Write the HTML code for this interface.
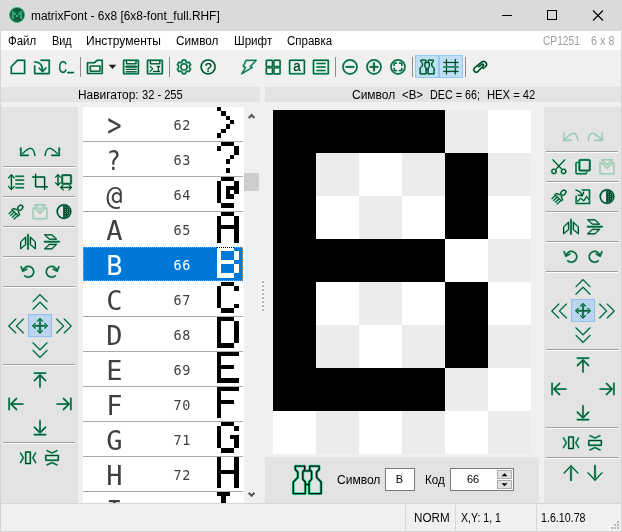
<!DOCTYPE html>
<html lang="ru"><head><meta charset="utf-8"><title>matrixFont - 6x8 [6x8-font_full.RHF]</title>
<style>
html,body{margin:0;padding:0;background:#f0f0f0;}
body{width:622px;height:532px;overflow:hidden;position:relative;font-family:"Liberation Sans","DejaVu Sans",sans-serif;font-size:12px;color:#000;}
.a{position:absolute;}
.t{position:absolute;white-space:pre;line-height:14px;height:14px;transform-origin:0 0;}
.mono{font-family:"DejaVu Sans Mono","Liberation Mono",monospace;}
#win{position:absolute;left:0;top:0;width:622px;height:532px;background:#f0f0f0;overflow:hidden;}
#title{left:0;top:0;width:622px;height:31px;background:#dadada;}
#menu{left:1px;top:31px;width:620px;height:19px;background:#fff;}
.strip{background:#e3e3e3;}
.sep{position:absolute;height:1px;background:#a0a0a0;border-bottom:1px solid #fff;}
.vsep{position:absolute;width:1px;background:#8c8c8c;}
.hot{position:absolute;box-sizing:border-box;}
#list{left:83px;top:107px;width:161px;height:396px;background:#fff;overflow:hidden;}
.row{position:absolute;left:0;width:161px;height:35px;}
.row .ln{position:absolute;left:0;top:34px;width:160px;height:1px;background:#ababab;}
.row .ch{position:absolute;left:11.4px;width:40px;text-align:center;top:1.4px;height:35px;line-height:35px;font-size:27px;color:#404040;}
.row .nm{position:absolute;left:86px;width:26px;text-align:center;top:1.2px;height:35px;line-height:35px;font-size:13.5px;letter-spacing:0.6px;text-indent:0.6px;color:#404040;}
.row.sel .bl{position:absolute;left:0;top:0;width:160px;height:34px;background:#0078d7;}
.row.sel .ch,.row.sel .nm{color:#fff;}
.inp{position:absolute;box-sizing:border-box;background:#fff;border:1px solid #7a7a7a;}

</style></head><body><div id="win">
<div class="a" id="title"></div>
<svg class="a" style="left:0;top:0" width="622" height="31" viewBox="0 0 622 31">
<circle cx="17.05" cy="14.9" r="7.5" fill="#125c40" stroke="#36b582" stroke-width="0.9"/>
<path d="M11.95 10.95h1.7v1.9h-1.7zM11.95 12.95h1.7v1.9h-1.7zM11.95 15.05h1.7v1.9h-1.7zM11.95 17.05h1.7v1.9h-1.7zM20.25 10.95h1.7v1.9h-1.7zM20.25 12.95h1.7v1.9h-1.7zM20.25 15.05h1.7v1.9h-1.7zM20.25 17.05h1.7v1.9h-1.7zM13.9 12.85h1.9v1.9h-1.9zM16 15h1.9v1.9h-1.9zM18.1 12.85h1.9v1.9h-1.9z" fill="#3dba89"/>
<path d="M502 15.5 H512" stroke="#000" stroke-width="1" fill="none"/>
<rect x="547.5" y="10.5" width="9" height="9" stroke="#000" stroke-width="1" fill="none"/>
<path d="M593 10.5 L603 20.5 M603 10.5 L593 20.5" stroke="#000" stroke-width="1.1" fill="none"/>
</svg>
<div class="t" style="left:30.5px;top:9px;transform:scaleX(0.9928);">matrixFont - 6x8 [6x8-font_full.RHF]</div>
<div class="a" id="menu"></div>
<div class="t" style="left:8.2px;top:34px;transform:scaleX(0.952);">Файл</div>
<div class="t" style="left:51.9px;top:34px;transform:scaleX(0.9071);">Вид</div>
<div class="t" style="left:85.8px;top:34px;transform:scaleX(1.001);">Инструменты</div>
<div class="t" style="left:175.9px;top:34px;transform:scaleX(0.9796);">Символ</div>
<div class="t" style="left:233.9px;top:34px;transform:scaleX(0.9675);">Шрифт</div>
<div class="t" style="left:286.6px;top:34px;transform:scaleX(0.958);">Справка</div>
<div class="t" style="left:542.9px;top:34px;color:#a0a0a0;transform:scaleX(0.8484);">CP1251</div>
<div class="t" style="left:590.6px;top:34px;color:#a0a0a0;transform:scaleX(0.9071);">6 x 8</div>
<div class="hot" style="left:415px;top:55px;width:24px;height:23px;background:#c2def5;border:1px solid #90c8f6;"></div>
<div class="hot" style="left:439px;top:55px;width:24px;height:23px;background:#c2def5;border:1px solid #90c8f6;"></div>
<div class="vsep" style="left:80px;top:57px;height:20px;"></div>
<div class="vsep" style="left:169px;top:57px;height:20px;"></div>
<div class="vsep" style="left:335px;top:57px;height:20px;"></div>
<div class="vsep" style="left:412px;top:57px;height:20px;"></div>
<div class="vsep" style="left:465px;top:57px;height:20px;"></div>
<div class="a strip" style="left:1px;top:87px;width:259px;height:15px;"></div>
<div class="a strip" style="left:265px;top:87px;width:356px;height:15px;"></div>
<div class="t" style="left:78.4px;top:88px;transform:scaleX(0.9937);">Навигатор:</div>
<div class="t" style="left:142.4px;top:88px;transform:scaleX(0.924);">32 - 255</div>
<div class="t" style="left:351.6px;top:88px;transform:scaleX(0.9981);">Символ</div>
<div class="t" style="left:401.7px;top:88px;transform:scaleX(0.9532);">&lt;B&gt;</div>
<div class="t" style="left:429.7px;top:88px;transform:scaleX(0.8976);">DEC = 66;</div>
<div class="t" style="left:486.6px;top:88px;transform:scaleX(0.9342);">HEX = 42</div>
<div class="a strip" style="left:1px;top:107px;width:77px;height:396px;"></div>
<div class="a strip" style="left:544px;top:107px;width:77px;height:396px;"></div>
<div class="a strip" style="left:265px;top:457px;width:274px;height:46px;"></div>
<div class="sep" style="left:3px;top:166px;width:72px;"></div>
<div class="sep" style="left:3px;top:196px;width:72px;"></div>
<div class="sep" style="left:3px;top:226px;width:72px;"></div>
<div class="sep" style="left:3px;top:256px;width:72px;"></div>
<div class="sep" style="left:3px;top:286px;width:72px;"></div>
<div class="sep" style="left:3px;top:364px;width:72px;"></div>
<div class="sep" style="left:3px;top:442px;width:72px;"></div>
<div class="sep" style="left:546px;top:151px;width:72px;"></div>
<div class="sep" style="left:546px;top:181px;width:72px;"></div>
<div class="sep" style="left:546px;top:211px;width:72px;"></div>
<div class="sep" style="left:546px;top:241px;width:72px;"></div>
<div class="sep" style="left:546px;top:271px;width:72px;"></div>
<div class="sep" style="left:546px;top:349px;width:72px;"></div>
<div class="sep" style="left:546px;top:427px;width:72px;"></div>
<div class="sep" style="left:546px;top:457px;width:72px;"></div>
<div class="hot" style="left:28px;top:314px;width:24px;height:23px;background:#bbd5ee;border:1px solid #93c1ec;"></div>
<div class="hot" style="left:571px;top:299px;width:24px;height:23px;background:#bbd5ee;border:1px solid #93c1ec;"></div>
<div class="a" id="list">
<div class="row" style="top:0px;">
<div class="ln"></div>
<div class="ch mono" style="transform:translate(0.4px,-0.3px) scale(0.88,1.16)">&gt;</div><div class="nm mono">62</div>
</div>
<div class="row" style="top:35px;">
<div class="ln"></div>
<div class="ch mono" style="transform:translate(-0.3px,0) scale(0.88,1)">?</div><div class="nm mono">63</div>
</div>
<div class="row" style="top:70px;">
<div class="ln"></div>
<div class="ch mono">@</div><div class="nm mono">64</div>
</div>
<div class="row" style="top:105px;">
<div class="ch mono">A</div><div class="nm mono">65</div>
</div>
<div class="row sel" style="top:140px;">
<div class="bl"></div>
<div class="ch mono">B</div><div class="nm mono">66</div>
</div>
<div class="row" style="top:175px;">
<div class="ln"></div>
<div class="ch mono">C</div><div class="nm mono">67</div>
</div>
<div class="row" style="top:210px;">
<div class="ln"></div>
<div class="ch mono">D</div><div class="nm mono">68</div>
</div>
<div class="row" style="top:245px;">
<div class="ln"></div>
<div class="ch mono">E</div><div class="nm mono">69</div>
</div>
<div class="row" style="top:280px;">
<div class="ln"></div>
<div class="ch mono">F</div><div class="nm mono">70</div>
</div>
<div class="row" style="top:315px;">
<div class="ln"></div>
<div class="ch mono">G</div><div class="nm mono">71</div>
</div>
<div class="row" style="top:350px;">
<div class="ln"></div>
<div class="ch mono">H</div><div class="nm mono">72</div>
</div>
<div class="row" style="top:385px;">
<div class="ln"></div>
<div class="ch mono">I</div><div class="nm mono">73</div>
</div>
<svg class="a" style="left:0;top:0" width="161" height="396" viewBox="83 107 161 396" shape-rendering="crispEdges">
<path d="M217 107H221V111H217ZM221 111H226V116H221ZM226 116H230V120H226ZM230 120H234V124H230ZM226 124H230V129H226ZM221 129H226V133H221ZM217 133H221V138H217Z" fill="#000"/>
<path d="M221 142H234V146H221ZM217 146H221V151H217ZM234 146H239V151H234ZM234 151H239V155H234ZM230 155H234V159H230ZM226 159H230V164H226ZM226 168H230V173H226Z" fill="#000"/>
<path d="M221 177H234V181H221ZM217 181H221V186H217ZM234 181H239V186H234ZM217 186H221V190H217ZM226 186H239V190H226ZM217 190H221V194H217ZM226 190H230V194H226ZM234 190H239V194H234ZM217 194H221V199H217ZM226 194H234V199H226ZM217 199H221V203H217ZM221 203H234V208H221Z" fill="#000"/>
<path d="M221 212H234V216H221ZM217 216H221V221H217ZM234 216H239V221H234ZM217 221H221V225H217ZM234 221H239V225H234ZM217 225H239V229H217ZM217 229H221V234H217ZM234 229H239V234H234ZM217 234H221V238H217ZM234 234H239V238H234ZM217 238H221V243H217ZM234 238H239V243H234Z" fill="#000"/>
<path d="M217 247H234V251H217ZM217 251H221V256H217ZM234 251H239V256H234ZM217 256H221V260H217ZM234 256H239V260H234ZM217 260H234V264H217ZM217 264H221V269H217ZM234 264H239V269H234ZM217 269H221V273H217ZM234 269H239V273H234ZM217 273H234V278H217Z" fill="#fff"/>
<path d="M221 282H234V286H221ZM217 286H221V291H217ZM234 286H239V291H234ZM217 291H221V295H217ZM217 295H221V299H217ZM217 299H221V304H217ZM217 304H221V308H217ZM234 304H239V308H234ZM221 308H234V313H221Z" fill="#000"/>
<path d="M217 317H234V321H217ZM217 321H221V326H217ZM234 321H239V326H234ZM217 326H221V330H217ZM234 326H239V330H234ZM217 330H221V334H217ZM234 330H239V334H234ZM217 334H221V339H217ZM234 334H239V339H234ZM217 339H221V343H217ZM234 339H239V343H234ZM217 343H234V348H217Z" fill="#000"/>
<path d="M217 352H239V356H217ZM217 356H221V361H217ZM217 361H221V365H217ZM217 365H234V369H217ZM217 369H221V374H217ZM217 374H221V378H217ZM217 378H239V383H217Z" fill="#000"/>
<path d="M217 387H239V391H217ZM217 391H221V396H217ZM217 396H221V400H217ZM217 400H234V404H217ZM217 404H221V409H217ZM217 409H221V413H217ZM217 413H221V418H217Z" fill="#000"/>
<path d="M221 422H234V426H221ZM217 426H221V431H217ZM234 426H239V431H234ZM217 431H221V435H217ZM217 435H221V439H217ZM230 435H239V439H230ZM217 439H221V444H217ZM234 439H239V444H234ZM217 444H221V448H217ZM234 444H239V448H234ZM221 448H234V453H221Z" fill="#000"/>
<path d="M217 457H221V461H217ZM234 457H239V461H234ZM217 461H221V466H217ZM234 461H239V466H234ZM217 466H221V470H217ZM234 466H239V470H234ZM217 470H239V474H217ZM217 474H221V479H217ZM234 474H239V479H234ZM217 479H221V483H217ZM234 479H239V483H234ZM217 483H221V488H217ZM234 483H239V488H234Z" fill="#000"/>
<path d="M217 492H230V496H217ZM221 496H226V501H221ZM221 501H226V505H221ZM221 505H226V509H221ZM221 509H226V514H221ZM221 514H226V518H221ZM217 518H230V523H217Z" fill="#000"/>
</svg>
<svg class="a" style="left:0;top:140px;mix-blend-mode:difference" width="160" height="34" viewBox="0 0 160 34" shape-rendering="crispEdges">
<path d="M0 0.5H160M0 33.5H160M0.5 0V34M159.5 0V34" stroke="#fff" stroke-width="1" stroke-dasharray="1 1" fill="none"/>
</svg>
</div>
<div class="a" style="left:244px;top:173px;width:15px;height:18px;background:#cdcdcd;"></div>
<svg class="a" style="left:244px;top:107px" width="17" height="396" viewBox="0 0 17 396">
<path d="M4.7 10.9 L7.6 8 L10.5 10.9" stroke="#555" stroke-width="2.1" fill="none"/>
<path d="M4.7 385.8 L7.6 388.7 L10.5 385.8" stroke="#555" stroke-width="2.1" fill="none"/>
</svg>
<svg class="a" style="left:260px;top:279px" width="6" height="34" viewBox="0 0 6 34" shape-rendering="crispEdges">
<rect x="1" y="1" width="2" height="2" fill="#fff"/><rect x="2" y="2" width="2" height="2" fill="#b4b4b4"/>
<rect x="1" y="5" width="2" height="2" fill="#fff"/><rect x="2" y="6" width="2" height="2" fill="#b4b4b4"/>
<rect x="1" y="9" width="2" height="2" fill="#fff"/><rect x="2" y="10" width="2" height="2" fill="#b4b4b4"/>
<rect x="1" y="13" width="2" height="2" fill="#fff"/><rect x="2" y="14" width="2" height="2" fill="#b4b4b4"/>
<rect x="1" y="17" width="2" height="2" fill="#fff"/><rect x="2" y="18" width="2" height="2" fill="#b4b4b4"/>
<rect x="1" y="21" width="2" height="2" fill="#fff"/><rect x="2" y="22" width="2" height="2" fill="#b4b4b4"/>
<rect x="1" y="25" width="2" height="2" fill="#fff"/><rect x="2" y="26" width="2" height="2" fill="#b4b4b4"/>
<rect x="1" y="29" width="2" height="2" fill="#fff"/><rect x="2" y="30" width="2" height="2" fill="#b4b4b4"/>
</svg>
<svg class="a" style="left:273px;top:110px" width="258" height="344" viewBox="0 0 258 344" shape-rendering="crispEdges">
<rect width="258" height="344" fill="#fff"/>
<path d="M0 0h43v43h-43zM86 0h43v43h-43zM172 0h43v43h-43zM43 43h43v43h-43zM129 43h43v43h-43zM215 43h43v43h-43zM0 86h43v43h-43zM86 86h43v43h-43zM172 86h43v43h-43zM43 129h43v43h-43zM129 129h43v43h-43zM215 129h43v43h-43zM0 172h43v43h-43zM86 172h43v43h-43zM172 172h43v43h-43zM43 215h43v43h-43zM129 215h43v43h-43zM215 215h43v43h-43zM0 258h43v43h-43zM86 258h43v43h-43zM172 258h43v43h-43zM43 301h43v43h-43zM129 301h43v43h-43zM215 301h43v43h-43z" fill="#ececec"/>
<path d="M0 0h43v43h-43zM43 0h43v43h-43zM86 0h43v43h-43zM129 0h43v43h-43zM0 43h43v43h-43zM172 43h43v43h-43zM0 86h43v43h-43zM172 86h43v43h-43zM0 129h43v43h-43zM43 129h43v43h-43zM86 129h43v43h-43zM129 129h43v43h-43zM0 172h43v43h-43zM172 172h43v43h-43zM0 215h43v43h-43zM172 215h43v43h-43zM0 258h43v43h-43zM43 258h43v43h-43zM86 258h43v43h-43zM129 258h43v43h-43z" fill="#000"/>
</svg>
<div class="t" style="left:336.6px;top:473px;transform:scaleX(1.0027);">Символ</div>
<div class="inp" style="left:385px;top:468px;width:30px;height:23px;"></div>
<div class="t" style="left:384.5px;width:30px;text-align:center;top:472px;font-size:11px;">B</div>
<div class="t" style="left:425.4px;top:473px;transform:scaleX(0.9703);">Код</div>
<div class="inp" style="left:450px;top:468px;width:64px;height:23px;"></div>
<div class="t" style="left:452.5px;width:41px;text-align:center;top:472px;font-size:11px;">66</div>
<div class="a" style="left:497px;top:470px;width:15px;height:9px;background:#e1e1e1;border:1px solid #adadad;box-sizing:border-box;"></div>
<div class="a" style="left:497px;top:480px;width:15px;height:9px;background:#e1e1e1;border:1px solid #adadad;box-sizing:border-box;"></div>
<div class="a" style="left:0;top:503px;width:622px;height:1px;background:#d7d7d7;"></div>
<div class="a" style="left:405px;top:505px;width:1px;height:25px;background:#d7d7d7;"></div>
<div class="a" style="left:455px;top:505px;width:1px;height:25px;background:#d7d7d7;"></div>
<div class="a" style="left:536px;top:505px;width:1px;height:25px;background:#d7d7d7;"></div>
<div class="t" style="left:414.2px;top:510.5px;transform:scaleX(0.9708);">NORM</div>
<div class="t" style="left:460.7px;top:510.5px;transform:scaleX(0.8815);">X,Y: 1, 1</div>
<div class="t" style="left:540.6px;top:510.5px;transform:scaleX(0.8892);">1.6.10.78</div>
<div class="a" style="left:0;top:31px;width:1px;height:501px;background:#d4d4d4;"></div>
<div class="a" style="left:621px;top:31px;width:1px;height:501px;background:#d4d4d4;"></div>
<div class="a" style="left:0;top:531px;width:622px;height:1px;background:#d4d4d4;"></div>
<svg class="a" style="left:0;top:0;pointer-events:none" width="622" height="532" viewBox="0 0 622 532" fill="none" stroke-linecap="round" stroke-linejoin="round">
<path d="M17.4 60.3 H24.6 V73.5 H11.3 V66.6 Z" stroke="#3dbb88" stroke-width="2" fill="none" /><path d="M17.4 60.3 H24.6 V73.5 H11.3 V66.6 Z" stroke="#145a3f" stroke-width="1.15" fill="none" /><path d="M41 60.3 H49.2 V73.6 H34.7 V66" stroke="#3dbb88" stroke-width="2" fill="none" /><path d="M41 60.3 H49.2 V73.6 H34.7 V66" stroke="#145a3f" stroke-width="1.15" fill="none" /><path d="M34.6 62 C39.5 61.8 42.6 64.5 42.6 71.2 M39.2 68.2 L42.6 71.7 L45.9 68" stroke="#3dbb88" stroke-width="1.9" fill="none" /><path d="M34.6 62 C39.5 61.8 42.6 64.5 42.6 71.2 M39.2 68.2 L42.6 71.7 L45.9 68" stroke="#145a3f" stroke-width="1.05" fill="none" /><text transform="translate(62.7 72.5) scale(0.74 1)" x="0" y="0" text-anchor="middle" font-family="Liberation Sans, sans-serif" font-size="15.8" fill="#3dbb88" stroke="#3dbb88" stroke-width="0.4">C</text><text transform="translate(62.7 72.5) scale(0.74 1)" x="0" y="0" text-anchor="middle" font-family="Liberation Sans, sans-serif" font-size="15.8" fill="#145a3f" stroke="none">C</text><path d="M67.8 72.6 H73.4" stroke="#3dbb88" stroke-width="2" fill="none" /><path d="M67.8 72.6 H73.4" stroke="#145a3f" stroke-width="1.15" fill="none" /><path d="M87.5 62.7 H94.4 L97.2 60.3 H102.2 V73.5 H87.5 Z" stroke="#3dbb88" stroke-width="2" fill="none" /><path d="M87.5 62.7 H94.4 L97.2 60.3 H102.2 V73.5 H87.5 Z" stroke="#145a3f" stroke-width="1.15" fill="none" /><path d="M90.5 66 H100 V71.2 H90.5 Z" stroke="#3dbb88" stroke-width="1.6" fill="none" /><path d="M90.5 66 H100 V71.2 H90.5 Z" stroke="#08301f" stroke-width="0.9" fill="none" /><path d="M108.7 64.8 H116.3 L112.5 69 Z" fill="#1a1a1a"/><rect x="123.6" y="60.3" width="14.8" height="13.4" rx="0.5" stroke="#3dbb88" stroke-width="2" fill="none"/><rect x="123.6" y="60.3" width="14.8" height="13.4" rx="0.5" stroke="#145a3f" stroke-width="1.15" fill="none"/><path d="M126.5 60.3 V63.8 H136 V60.3" stroke="#3dbb88" stroke-width="1.6" fill="none" /><path d="M126.5 60.3 V63.8 H136 V60.3" stroke="#08301f" stroke-width="0.9" fill="none" /><path d="M126.3 66.7 H136.2" stroke="#3dbb88" stroke-width="2.6" fill="none" /><path d="M126.3 66.7 H136.2" stroke="#145a3f" stroke-width="1.75" fill="none" /><path d="M126.3 69.4 H136.2 M126.3 71.8 H136.2" stroke="#3dbb88" stroke-width="1.4" fill="none" /><path d="M126.3 69.4 H136.2 M126.3 71.8 H136.2" stroke="#08301f" stroke-width="0.9" fill="none" /><rect x="147.5" y="60.3" width="14.8" height="13.4" rx="0.5" stroke="#3dbb88" stroke-width="2" fill="none"/><rect x="147.5" y="60.3" width="14.8" height="13.4" rx="0.5" stroke="#145a3f" stroke-width="1.15" fill="none"/><path d="M150.4 60.3 V63.8 H159.8 V60.3" stroke="#3dbb88" stroke-width="1.6" fill="none" /><path d="M150.4 60.3 V63.8 H159.8 V60.3" stroke="#08301f" stroke-width="0.9" fill="none" /><path d="M150.2 66.4 L152.8 68.8 L150.2 71.2 M153.4 71.4 H156.6 M157.2 66.6 H159.6 M157.2 71.4 H159.6 M158.4 66.6 V71.4" stroke="#3dbb88" stroke-width="1.5" fill="none" /><path d="M150.2 66.4 L152.8 68.8 L150.2 71.2 M153.4 71.4 H156.6 M157.2 66.6 H159.6 M157.2 71.4 H159.6 M158.4 66.6 V71.4" stroke="#08301f" stroke-width="0.9" fill="none" /><path d="M189.42 67.86 L190.66 69.06 L189.2 71.58 L187.54 71.11 L185.88 72.07 L185.46 73.75 L182.54 73.75 L182.12 72.07 L180.46 71.11 L178.8 71.58 L177.34 69.06 L178.58 67.86 L178.58 65.94 L177.34 64.74 L178.8 62.22 L180.46 62.69 L182.12 61.73 L182.54 60.05 L185.46 60.05 L185.88 61.73 L187.54 62.69 L189.2 62.22 L190.66 64.74 L189.42 65.94Z" stroke="#3dbb88" stroke-width="1.9" fill="none" /><path d="M189.42 67.86 L190.66 69.06 L189.2 71.58 L187.54 71.11 L185.88 72.07 L185.46 73.75 L182.54 73.75 L182.12 72.07 L180.46 71.11 L178.8 71.58 L177.34 69.06 L178.58 67.86 L178.58 65.94 L177.34 64.74 L178.8 62.22 L180.46 62.69 L182.12 61.73 L182.54 60.05 L185.46 60.05 L185.88 61.73 L187.54 62.69 L189.2 62.22 L190.66 64.74 L189.42 65.94Z" stroke="#145a3f" stroke-width="1.05" fill="none" /><circle cx="184" cy="66.9" r="3.2" stroke="#3dbb88" stroke-width="1.7" fill="none"/><circle cx="184" cy="66.9" r="3.2" stroke="#0b3a27" stroke-width="0.9" fill="none"/><circle cx="208.1" cy="66.9" r="7" stroke="#3dbb88" stroke-width="1.9" fill="none"/><circle cx="208.1" cy="66.9" r="7" stroke="#0b3a27" stroke-width="1.05" fill="none"/><text transform="translate(208.2 71.6) scale(1.0 1)" x="0" y="0" text-anchor="middle" font-family="Liberation Sans, sans-serif" font-size="12.8" fill="#3dbb88" stroke="#3dbb88" stroke-width="0.4">?</text><text transform="translate(208.2 71.6) scale(1.0 1)" x="0" y="0" text-anchor="middle" font-family="Liberation Sans, sans-serif" font-size="12.8" fill="#0b3a27" stroke="none">?</text><path d="M246.3 60.3 H256.2 L250.2 66.6 L252.2 67.4 L241.7 73.8 L245.5 67.6 L243.4 66.4 Z" stroke="#3dbb88" stroke-width="1.8" fill="none" /><path d="M246.3 60.3 H256.2 L250.2 66.6 L252.2 67.4 L241.7 73.8 L245.5 67.6 L243.4 66.4 Z" stroke="#145a3f" stroke-width="0.95" fill="none" /><rect x="266.3" y="60.3" width="6.2" height="6.2" rx="0.6" stroke="#3dbb88" stroke-width="2" fill="none"/><rect x="266.3" y="60.3" width="6.2" height="6.2" rx="0.6" stroke="#145a3f" stroke-width="1.15" fill="none"/><rect x="266.3" y="67.7" width="6.2" height="6.2" rx="0.6" stroke="#3dbb88" stroke-width="2" fill="none"/><rect x="266.3" y="67.7" width="6.2" height="6.2" rx="0.6" stroke="#145a3f" stroke-width="1.15" fill="none"/><rect x="273.9" y="60.3" width="6.2" height="6.2" rx="0.6" stroke="#3dbb88" stroke-width="2" fill="none"/><rect x="273.9" y="60.3" width="6.2" height="6.2" rx="0.6" stroke="#145a3f" stroke-width="1.15" fill="none"/><rect x="273.9" y="67.7" width="6.2" height="6.2" rx="0.6" stroke="#3dbb88" stroke-width="2" fill="none"/><rect x="273.9" y="67.7" width="6.2" height="6.2" rx="0.6" stroke="#145a3f" stroke-width="1.15" fill="none"/><rect x="289.6" y="60.3" width="14.8" height="13.4" rx="0.5" stroke="#3dbb88" stroke-width="2" fill="none"/><rect x="289.6" y="60.3" width="14.8" height="13.4" rx="0.5" stroke="#145a3f" stroke-width="1.15" fill="none"/><text transform="translate(297 71) scale(0.86 1)" x="0" y="0" text-anchor="middle" font-family="Liberation Sans, sans-serif" font-size="15.5" fill="#3dbb88" stroke="#3dbb88" stroke-width="0.4">a</text><text transform="translate(297 71) scale(0.86 1)" x="0" y="0" text-anchor="middle" font-family="Liberation Sans, sans-serif" font-size="15.5" fill="#0b3a27" stroke="none">a</text><rect x="313.5" y="60.3" width="14.8" height="13.4" rx="0.5" stroke="#3dbb88" stroke-width="2" fill="none"/><rect x="313.5" y="60.3" width="14.8" height="13.4" rx="0.5" stroke="#145a3f" stroke-width="1.15" fill="none"/><path d="M317 63.5 H325 M317 67 H325 M317 70.5 H325" stroke="#3dbb88" stroke-width="1.8" fill="none" /><path d="M317 63.5 H325 M317 67 H325 M317 70.5 H325" stroke="#145a3f" stroke-width="0.95" fill="none" /><circle cx="350" cy="66.9" r="7" stroke="#3dbb88" stroke-width="2" fill="none"/><circle cx="350" cy="66.9" r="7" stroke="#145a3f" stroke-width="1.15" fill="none"/><circle cx="374" cy="66.9" r="7" stroke="#3dbb88" stroke-width="2" fill="none"/><circle cx="374" cy="66.9" r="7" stroke="#145a3f" stroke-width="1.15" fill="none"/><circle cx="398" cy="66.9" r="7" stroke="#3dbb88" stroke-width="2" fill="none"/><circle cx="398" cy="66.9" r="7" stroke="#145a3f" stroke-width="1.15" fill="none"/><path d="M346.4 66.9 H353.6" stroke="#3dbb88" stroke-width="2.4" fill="none" /><path d="M346.4 66.9 H353.6" stroke="#145a3f" stroke-width="1.55" fill="none" /><path d="M370.4 66.9 H377.6 M374 63.3 V70.5" stroke="#3dbb88" stroke-width="2.4" fill="none" /><path d="M370.4 66.9 H377.6 M374 63.3 V70.5" stroke="#145a3f" stroke-width="1.55" fill="none" /><path d="M394.2 65.4 V63.1 H396.5 M399.5 63.1 H401.8 V65.4 M401.8 68.4 V70.7 H399.5 M396.5 70.7 H394.2 V68.4" stroke="#3dbb88" stroke-width="1.7" fill="none" /><path d="M394.2 65.4 V63.1 H396.5 M399.5 63.1 H401.8 V65.4 M401.8 68.4 V70.7 H399.5 M396.5 70.7 H394.2 V68.4" stroke="#08301f" stroke-width="0.9" fill="none" /><path d="M433.05 60.1 L428.35 60.1 L428.35 61.85 L429.3 62.85 L429.3 66.6 L428.05 68.05 L428.05 73.85 L434.05 73.85 L434.05 68.05 L431.8 65.75 L431.8 63.1 L433.05 61.85Z M421.15 60.1 L425.85 60.1 L425.85 61.85 L424.9 62.85 L424.9 66.6 L426.15 68.05 L426.15 73.85 L420.15 73.85 L420.15 68.05 L422.4 65.75 L422.4 63.1 L421.15 61.85Z M425.5 62.5 L428.7 62.5 M426.15 69.3 L428.05 69.3" stroke="#3dbb88" stroke-width="1.8" fill="none" /><path d="M433.05 60.1 L428.35 60.1 L428.35 61.85 L429.3 62.85 L429.3 66.6 L428.05 68.05 L428.05 73.85 L434.05 73.85 L434.05 68.05 L431.8 65.75 L431.8 63.1 L433.05 61.85Z M421.15 60.1 L425.85 60.1 L425.85 61.85 L424.9 62.85 L424.9 66.6 L426.15 68.05 L426.15 73.85 L420.15 73.85 L420.15 68.05 L422.4 65.75 L422.4 63.1 L421.15 61.85Z M425.5 62.5 L428.7 62.5 M426.15 69.3 L428.05 69.3" stroke="#08301f" stroke-width="0.95" fill="none" /><path d="M446.5 59.6 V73.9 M455.3 59.6 V73.9 M443.7 62.5 H458 M443.7 71.4 H458" stroke="#3dbb88" stroke-width="1.6" fill="none" /><path d="M446.5 59.6 V73.9 M455.3 59.6 V73.9 M443.7 62.5 H458 M443.7 71.4 H458" stroke="#08301f" stroke-width="0.9" fill="none" /><path d="M443.7 66.9 H458" stroke="#3dbb88" stroke-width="1.9" fill="none" /><path d="M443.7 66.9 H458" stroke="#145a3f" stroke-width="1.05" fill="none" /><g transform="translate(479.9 67.05) rotate(-36.4)"><path d="M1.8 3 L4.47 3 A3 3 0 0 0 4.47 -3 L-4.47 -2.5 A2.5 2.5 0 0 0 -4.47 2.5 L3.2 1.1 A1.05 1.05 0 0 0 3.2 -1 L-0.8 -1" stroke="#3dbb88" stroke-width="1.9" fill="none" /><path d="M1.8 3 L4.47 3 A3 3 0 0 0 4.47 -3 L-4.47 -2.5 A2.5 2.5 0 0 0 -4.47 2.5 L3.2 1.1 A1.05 1.05 0 0 0 3.2 -1 L-0.8 -1" stroke="#08301f" stroke-width="1.05" fill="none" /></g>
<path d="M20.8 155.4 C25 151 28 148.3 30.6 148.3 C33 148.3 34.3 151.5 34.9 155.5" stroke="#3dbb88" stroke-width="1.75" fill="none" /><path d="M20.8 155.4 C25 151 28 148.3 30.6 148.3 C33 148.3 34.3 151.5 34.9 155.5" stroke="#08301f" stroke-width="0.9" fill="none" /><path d="M20.8 148 V155.4 H28.2" stroke="#3dbb88" stroke-width="2.1" fill="none" /><path d="M20.8 148 V155.4 H28.2" stroke="#145a3f" stroke-width="1.25" fill="none" />
<path d="M59.2 155.4 C55 151 52 148.3 49.4 148.3 C47 148.3 45.7 151.5 45.1 155.5" stroke="#3dbb88" stroke-width="1.75" fill="none" /><path d="M59.2 155.4 C55 151 52 148.3 49.4 148.3 C47 148.3 45.7 151.5 45.1 155.5" stroke="#08301f" stroke-width="0.9" fill="none" /><path d="M59.2 148 V155.4 H51.8" stroke="#3dbb88" stroke-width="2.1" fill="none" /><path d="M59.2 148 V155.4 H51.8" stroke="#145a3f" stroke-width="1.25" fill="none" />
<path d="M11.4 175 V189.3 M8.6 177.8 L11.4 174.8 L14.2 177.8 M8.6 186.5 L11.4 189.5 L14.2 186.5" stroke="#3dbb88" stroke-width="1.75" fill="none" /><path d="M11.4 175 V189.3 M8.6 177.8 L11.4 174.8 L14.2 177.8 M8.6 186.5 L11.4 189.5 L14.2 186.5" stroke="#08301f" stroke-width="0.9" fill="none" /><path d="M15.9 176.2 H23.5 M15.9 180.1 H23.5 M15.9 183.9 H23.5 M15.9 187.7 H23.5" stroke="#3dbb88" stroke-width="1.9" fill="none" /><path d="M15.9 176.2 H23.5 M15.9 180.1 H23.5 M15.9 183.9 H23.5 M15.9 187.7 H23.5" stroke="#145a3f" stroke-width="1.05" fill="none" />
<path d="M35.6 174.3 V186.8 H47.4 M32.7 177 H44.6 V189.3" stroke="#3dbb88" stroke-width="1.85" fill="none" /><path d="M35.6 174.3 V186.8 H47.4 M32.7 177 H44.6 V189.3" stroke="#08301f" stroke-width="1" fill="none" />
<rect x="62.2" y="175.1" width="8.8" height="8.6" rx="0.8" stroke="#3dbb88" stroke-width="2.4" fill="none"/><rect x="62.2" y="175.1" width="8.8" height="8.6" rx="0.8" stroke="#145a3f" stroke-width="1.55" fill="none"/><path d="M58 175 V185 M55.6 177.2 L58 174.7 L60.4 177.2 M55.6 182.8 L58 185.3 L60.4 182.8 M61 187.4 H71.2 M63.2 185 L60.7 187.4 L63.2 189.8 M69 185 L71.5 187.4 L69 189.8" stroke="#3dbb88" stroke-width="1.65" fill="none" /><path d="M58 175 V185 M55.6 177.2 L58 174.7 L60.4 177.2 M55.6 182.8 L58 185.3 L60.4 182.8 M61 187.4 H71.2 M63.2 185 L60.7 187.4 L63.2 189.8 M69 185 L71.5 187.4 L69 189.8" stroke="#08301f" stroke-width="0.9" fill="none" />
<g transform="translate(16 212) rotate(45)"><path d="M-0.8 -3.3 V-2.3 L-4.5 -0.5 V1.1 H4.5 V-0.5 L0.8 -2.3 V-3.3 M-3.7 1.3 V6.1 M-1.25 1.3 V6.1 M1.25 1.3 V6.1 M3.7 1.3 V6.1" stroke="#3dbb88" stroke-width="1.7" fill="none" /><path d="M-0.8 -3.3 V-2.3 L-4.5 -0.5 V1.1 H4.5 V-0.5 L0.8 -2.3 V-3.3 M-3.7 1.3 V6.1 M-1.25 1.3 V6.1 M1.25 1.3 V6.1 M3.7 1.3 V6.1" stroke="#08301f" stroke-width="0.9" fill="none" /><ellipse cx="0" cy="-6" rx="2.1" ry="2.9" stroke="#3dbb88" stroke-width="1.8" fill="none"/><ellipse cx="0" cy="-6" rx="2.1" ry="2.9" stroke="#0b3a27" stroke-width="0.95" fill="none"/></g>
<path d="M35.1 208.3 H33 V218.7 H46.9 V208.3 H44.9 M34.7 204.7 H45.3 L40 209.8 Z M34.2 207.2 L40 213.3 L45.8 207.2" stroke="#9ccbb6" stroke-width="1.5" fill="none" />
<path d="M63.1 204.8 A6.8 6.8 0 0 1 63.1 218.4 Z" fill="#0e4430" stroke="none"/><path d="M64.8 206.7h1v1h-1zM64.8 208.9h1v1h-1zM64.8 211.1h1v1h-1zM64.8 213.3h1v1h-1zM64.8 215.5h1v1h-1zM67 208.9h1v1h-1zM67 211.1h1v1h-1zM67 213.3h1v1h-1z" fill="#3dbb88" stroke="none"/><circle cx="64" cy="211.6" r="6.8" stroke="#3dbb88" stroke-width="2" fill="none"/><circle cx="64" cy="211.6" r="6.8" stroke="#0b3a27" stroke-width="1.15" fill="none"/>
<path d="M28 234.7 V248.9" stroke="#3dbb88" stroke-width="2.3" fill="none" /><path d="M28 234.7 V248.9" stroke="#145a3f" stroke-width="1.45" fill="none" /><path d="M20.8 241.9 L25.6 237.2 L25.6 244.6 L20.8 248.6Z" stroke="#3dbb88" stroke-width="1.65" fill="none" /><path d="M20.8 241.9 L25.6 237.2 L25.6 244.6 L20.8 248.6Z" stroke="#08301f" stroke-width="0.9" fill="none" /><path d="M35.2 241.9 L30.4 237.2 L30.4 244.6 L35.2 248.6Z" stroke="#3dbb88" stroke-width="1.65" fill="none" /><path d="M35.2 241.9 L30.4 237.2 L30.4 244.6 L35.2 248.6Z" stroke="#08301f" stroke-width="0.9" fill="none" />
<path d="M44.7 241.7 H59.1" stroke="#3dbb88" stroke-width="2.3" fill="none" /><path d="M44.7 241.7 H59.1" stroke="#145a3f" stroke-width="1.45" fill="none" /><path d="M44.9 234.8 L51.9 234.8 L56.5 239.2 L49.6 239.2Z" stroke="#3dbb88" stroke-width="1.65" fill="none" /><path d="M44.9 234.8 L51.9 234.8 L56.5 239.2 L49.6 239.2Z" stroke="#08301f" stroke-width="0.9" fill="none" /><path d="M44.9 248.8 L51.9 248.8 L56.5 244.4 L49.6 244.4Z" stroke="#3dbb88" stroke-width="1.65" fill="none" /><path d="M44.9 248.8 L51.9 248.8 L56.5 244.4 L49.6 244.4Z" stroke="#08301f" stroke-width="0.9" fill="none" />
<path d="M23 271 A5.4 5.4 0 1 1 24.88 275.89 M21.1 266.7 L22.9 271.3 L26.9 269" stroke="#3dbb88" stroke-width="2" fill="none" /><path d="M23 271 A5.4 5.4 0 1 1 24.88 275.89 M21.1 266.7 L22.9 271.3 L26.9 269" stroke="#145a3f" stroke-width="1.15" fill="none" />
<path d="M57 271 A5.4 5.4 0 1 0 55.12 275.89 M58.9 266.7 L57.1 271.3 L53.1 269" stroke="#3dbb88" stroke-width="2" fill="none" /><path d="M57 271 A5.4 5.4 0 1 0 55.12 275.89 M58.9 266.7 L57.1 271.3 L53.1 269" stroke="#145a3f" stroke-width="1.15" fill="none" />
<path d="M33.1 301.5 L40 294.6 L46.9 301.5 M33.1 309.1 L40 302.2 L46.9 309.1 " stroke="#3dbb88" stroke-width="1.7" fill="none" /><path d="M33.1 301.5 L40 294.6 L46.9 301.5 M33.1 309.1 L40 302.2 L46.9 309.1 " stroke="#08301f" stroke-width="0.9" fill="none" />
<path d="M15.7 319.1 L8.8 326 L15.7 332.9 M23.3 319.1 L16.4 326 L23.3 332.9 " stroke="#3dbb88" stroke-width="1.7" fill="none" /><path d="M15.7 319.1 L8.8 326 L15.7 332.9 M23.3 319.1 L16.4 326 L23.3 332.9 " stroke="#08301f" stroke-width="0.9" fill="none" />
<path d="M64.3 319.1 L71.2 326 L64.3 332.9 M56.7 319.1 L63.6 326 L56.7 332.9 " stroke="#3dbb88" stroke-width="1.7" fill="none" /><path d="M64.3 319.1 L71.2 326 L64.3 332.9 M56.7 319.1 L63.6 326 L56.7 332.9 " stroke="#08301f" stroke-width="0.9" fill="none" />
<path d="M33.1 350.5 L40 357.4 L46.9 350.5 M33.1 342.9 L40 349.8 L46.9 342.9 " stroke="#3dbb88" stroke-width="1.7" fill="none" /><path d="M33.1 350.5 L40 357.4 L46.9 350.5 M33.1 342.9 L40 349.8 L46.9 342.9 " stroke="#08301f" stroke-width="0.9" fill="none" />
<path d="M33.4 325.8 H46.6 M40 319.2 V332.4" stroke="#3dbb88" stroke-width="2.3" fill="none" /><path d="M33.4 325.8 H46.6 M40 319.2 V332.4" stroke="#145a3f" stroke-width="1.45" fill="none" /><path d="M37.7 320.9 L40 318.6 L42.3 320.9 M37.7 330.7 L40 333 L42.3 330.7 M35.1 323.5 L32.8 325.8 L35.1 328.1 M44.9 323.5 L47.2 325.8 L44.9 328.1" stroke="#3dbb88" stroke-width="1.7" fill="none" /><path d="M37.7 320.9 L40 318.6 L42.3 320.9 M37.7 330.7 L40 333 L42.3 330.7 M35.1 323.5 L32.8 325.8 L35.1 328.1 M44.9 323.5 L47.2 325.8 L44.9 328.1" stroke="#08301f" stroke-width="0.9" fill="none" />
<path d="M34.4 373.1 H45.6 M40 375 V386.9 M34.5 380.5 L40 375 L45.5 380.5" stroke="#3dbb88" stroke-width="2.1" fill="none" /><path d="M34.4 373.1 H45.6 M40 375 V386.9 M34.5 380.5 L40 375 L45.5 380.5" stroke="#145a3f" stroke-width="1.25" fill="none" />
<path d="M9.1 398.4 V409.6 M11 404 H22.9 M16.5 398.5 L11 404 L16.5 409.5" stroke="#3dbb88" stroke-width="2.1" fill="none" /><path d="M9.1 398.4 V409.6 M11 404 H22.9 M16.5 398.5 L11 404 L16.5 409.5" stroke="#145a3f" stroke-width="1.25" fill="none" />
<path d="M70.9 398.4 V409.6 M69 404 H57.1 M63.5 398.5 L69 404 L63.5 409.5" stroke="#3dbb88" stroke-width="2.1" fill="none" /><path d="M70.9 398.4 V409.6 M69 404 H57.1 M63.5 398.5 L69 404 L63.5 409.5" stroke="#145a3f" stroke-width="1.25" fill="none" />
<path d="M34.4 434.6 H45.6 M40 432.7 V420.8 M34.5 427.2 L40 432.7 L45.5 427.2" stroke="#3dbb88" stroke-width="2.1" fill="none" /><path d="M34.4 434.6 H45.6 M40 432.7 V420.8 M34.5 427.2 L40 432.7 L45.5 427.2" stroke="#145a3f" stroke-width="1.25" fill="none" />
<rect x="25.7" y="452" width="4.6" height="11.5" rx="0" stroke="#3dbb88" stroke-width="1.9" fill="none"/><rect x="25.7" y="452" width="4.6" height="11.5" rx="0" stroke="#0b3a27" stroke-width="1.05" fill="none"/><path d="M20.5 453 L23.4 457.8 L20.5 462.6 M35.6 453 L32.8 457.8 L35.6 462.6" stroke="#3dbb88" stroke-width="1.9" fill="none" /><path d="M20.5 453 L23.4 457.8 L20.5 462.6 M35.6 453 L32.8 457.8 L35.6 462.6" stroke="#145a3f" stroke-width="1.05" fill="none" />
<rect x="45.8" y="455.5" width="12.5" height="4.8" rx="0" stroke="#3dbb88" stroke-width="1.9" fill="none"/><rect x="45.8" y="455.5" width="12.5" height="4.8" rx="0" stroke="#0b3a27" stroke-width="1.05" fill="none"/><path d="M47 450.7 L52 453 L57 450.7 M47 464.9 L52 462.6 L57 464.9" stroke="#3dbb88" stroke-width="1.9" fill="none" /><path d="M47 450.7 L52 453 L57 450.7 M47 464.9 L52 462.6 L57 464.9" stroke="#145a3f" stroke-width="1.05" fill="none" />
<path d="M563.8 133 V140.4 H571.2 M563.8 140.4 C568 136 571 133.3 573.6 133.3 C576 133.3 577.3 136.5 577.9 140.5" stroke="#9ccbb6" stroke-width="1.6" fill="none" />
<path d="M602.2 133 V140.4 H594.8 M602.2 140.4 C598 136 595 133.3 592.4 133.3 C590 133.3 588.7 136.5 588.1 140.5" stroke="#9ccbb6" stroke-width="1.6" fill="none" />
<path d="M553 159.9 L562.3 169.8 M564.7 159.9 L555.4 169.8" stroke="#3dbb88" stroke-width="1.8" fill="none" /><path d="M553 159.9 L562.3 169.8 M564.7 159.9 L555.4 169.8" stroke="#08301f" stroke-width="0.95" fill="none" /><circle cx="554" cy="171.4" r="2.2" stroke="#3dbb88" stroke-width="1.8" fill="none"/><circle cx="554" cy="171.4" r="2.2" stroke="#0b3a27" stroke-width="0.95" fill="none"/><circle cx="563.6" cy="171.4" r="2.2" stroke="#3dbb88" stroke-width="1.8" fill="none"/><circle cx="563.6" cy="171.4" r="2.2" stroke="#0b3a27" stroke-width="0.95" fill="none"/>
<rect x="576" y="162.4" width="10.6" height="11.3" rx="1" stroke="#3dbb88" stroke-width="1.9" fill="none"/><rect x="576" y="162.4" width="10.6" height="11.3" rx="1" stroke="#145a3f" stroke-width="1.05" fill="none"/><rect x="579.4" y="159.9" width="10.4" height="10.7" rx="1" stroke="#3dbb88" stroke-width="2.4" fill="#e3e3e3"/><rect x="579.4" y="159.9" width="10.4" height="10.7" rx="1" stroke="#145a3f" stroke-width="1.55" fill="none"/>
<path d="M602.1 163.3 H600 V173.7 H613.9 V163.3 H611.9 M601.7 159.7 H612.3 L607 164.8 Z M601.2 162.2 L607 168.3 L612.8 162.2" stroke="#9ccbb6" stroke-width="1.5" fill="none" />
<g transform="translate(559 197) rotate(45)"><path d="M-0.8 -3.3 V-2.3 L-4.5 -0.5 V1.1 H4.5 V-0.5 L0.8 -2.3 V-3.3 M-3.7 1.3 V6.1 M-1.25 1.3 V6.1 M1.25 1.3 V6.1 M3.7 1.3 V6.1" stroke="#3dbb88" stroke-width="1.7" fill="none" /><path d="M-0.8 -3.3 V-2.3 L-4.5 -0.5 V1.1 H4.5 V-0.5 L0.8 -2.3 V-3.3 M-3.7 1.3 V6.1 M-1.25 1.3 V6.1 M1.25 1.3 V6.1 M3.7 1.3 V6.1" stroke="#08301f" stroke-width="0.9" fill="none" /><ellipse cx="0" cy="-6" rx="2.1" ry="2.9" stroke="#3dbb88" stroke-width="1.8" fill="none"/><ellipse cx="0" cy="-6" rx="2.1" ry="2.9" stroke="#0b3a27" stroke-width="0.95" fill="none"/></g>
<path d="M582.3 190 L589.5 190 L589.5 203.5 L576.2 203.5 L576.2 196.3" stroke="#3dbb88" stroke-width="2" fill="none" /><path d="M582.3 190 L589.5 190 L589.5 203.5 L576.2 203.5 L576.2 196.3" stroke="#145a3f" stroke-width="1.15" fill="none" /><path d="M576.7 202.1 L580.7 198.3 L583.9 200.8 L586.6 196.5 L589.3 199.9 M576 190 Q581 191 582.3 195.6 M583.6 192.2 L582.3 195.8 L578.4 195.1" stroke="#3dbb88" stroke-width="1.7" fill="none" /><path d="M576.7 202.1 L580.7 198.3 L583.9 200.8 L586.6 196.5 L589.3 199.9 M576 190 Q581 191 582.3 195.6 M583.6 192.2 L582.3 195.8 L578.4 195.1" stroke="#08301f" stroke-width="0.9" fill="none" />
<path d="M606.1 189.8 A6.8 6.8 0 0 1 606.1 203.4 Z" fill="#0e4430" stroke="none"/><path d="M607.8 191.7h1v1h-1zM607.8 193.9h1v1h-1zM607.8 196.1h1v1h-1zM607.8 198.3h1v1h-1zM607.8 200.5h1v1h-1zM610 193.9h1v1h-1zM610 196.1h1v1h-1zM610 198.3h1v1h-1z" fill="#3dbb88" stroke="none"/><circle cx="607" cy="196.6" r="6.8" stroke="#3dbb88" stroke-width="2" fill="none"/><circle cx="607" cy="196.6" r="6.8" stroke="#0b3a27" stroke-width="1.15" fill="none"/>
<path d="M571 219.7 V233.9" stroke="#3dbb88" stroke-width="2.3" fill="none" /><path d="M571 219.7 V233.9" stroke="#145a3f" stroke-width="1.45" fill="none" /><path d="M563.8 226.9 L568.6 222.2 L568.6 229.6 L563.8 233.6Z" stroke="#3dbb88" stroke-width="1.65" fill="none" /><path d="M563.8 226.9 L568.6 222.2 L568.6 229.6 L563.8 233.6Z" stroke="#08301f" stroke-width="0.9" fill="none" /><path d="M578.2 226.9 L573.4 222.2 L573.4 229.6 L578.2 233.6Z" stroke="#3dbb88" stroke-width="1.65" fill="none" /><path d="M578.2 226.9 L573.4 222.2 L573.4 229.6 L578.2 233.6Z" stroke="#08301f" stroke-width="0.9" fill="none" />
<path d="M587.7 226.7 H602.1" stroke="#3dbb88" stroke-width="2.3" fill="none" /><path d="M587.7 226.7 H602.1" stroke="#145a3f" stroke-width="1.45" fill="none" /><path d="M587.9 219.8 L594.9 219.8 L599.5 224.2 L592.6 224.2Z" stroke="#3dbb88" stroke-width="1.65" fill="none" /><path d="M587.9 219.8 L594.9 219.8 L599.5 224.2 L592.6 224.2Z" stroke="#08301f" stroke-width="0.9" fill="none" /><path d="M587.9 233.8 L594.9 233.8 L599.5 229.4 L592.6 229.4Z" stroke="#3dbb88" stroke-width="1.65" fill="none" /><path d="M587.9 233.8 L594.9 233.8 L599.5 229.4 L592.6 229.4Z" stroke="#08301f" stroke-width="0.9" fill="none" />
<path d="M566 256 A5.4 5.4 0 1 1 567.88 260.89 M564.1 251.7 L565.9 256.3 L569.9 254" stroke="#3dbb88" stroke-width="2" fill="none" /><path d="M566 256 A5.4 5.4 0 1 1 567.88 260.89 M564.1 251.7 L565.9 256.3 L569.9 254" stroke="#145a3f" stroke-width="1.15" fill="none" />
<path d="M600 256 A5.4 5.4 0 1 0 598.12 260.89 M601.9 251.7 L600.1 256.3 L596.1 254" stroke="#3dbb88" stroke-width="2" fill="none" /><path d="M600 256 A5.4 5.4 0 1 0 598.12 260.89 M601.9 251.7 L600.1 256.3 L596.1 254" stroke="#145a3f" stroke-width="1.15" fill="none" />
<path d="M576.1 286.5 L583 279.6 L589.9 286.5 M576.1 294.1 L583 287.2 L589.9 294.1 " stroke="#3dbb88" stroke-width="1.7" fill="none" /><path d="M576.1 286.5 L583 279.6 L589.9 286.5 M576.1 294.1 L583 287.2 L589.9 294.1 " stroke="#08301f" stroke-width="0.9" fill="none" />
<path d="M558.7 304.1 L551.8 311 L558.7 317.9 M566.3 304.1 L559.4 311 L566.3 317.9 " stroke="#3dbb88" stroke-width="1.7" fill="none" /><path d="M558.7 304.1 L551.8 311 L558.7 317.9 M566.3 304.1 L559.4 311 L566.3 317.9 " stroke="#08301f" stroke-width="0.9" fill="none" />
<path d="M607.3 304.1 L614.2 311 L607.3 317.9 M599.7 304.1 L606.6 311 L599.7 317.9 " stroke="#3dbb88" stroke-width="1.7" fill="none" /><path d="M607.3 304.1 L614.2 311 L607.3 317.9 M599.7 304.1 L606.6 311 L599.7 317.9 " stroke="#08301f" stroke-width="0.9" fill="none" />
<path d="M576.1 335.5 L583 342.4 L589.9 335.5 M576.1 327.9 L583 334.8 L589.9 327.9 " stroke="#3dbb88" stroke-width="1.7" fill="none" /><path d="M576.1 335.5 L583 342.4 L589.9 335.5 M576.1 327.9 L583 334.8 L589.9 327.9 " stroke="#08301f" stroke-width="0.9" fill="none" />
<path d="M576.4 310.8 H589.6 M583 304.2 V317.4" stroke="#3dbb88" stroke-width="2.3" fill="none" /><path d="M576.4 310.8 H589.6 M583 304.2 V317.4" stroke="#145a3f" stroke-width="1.45" fill="none" /><path d="M580.7 305.9 L583 303.6 L585.3 305.9 M580.7 315.7 L583 318 L585.3 315.7 M578.1 308.5 L575.8 310.8 L578.1 313.1 M587.9 308.5 L590.2 310.8 L587.9 313.1" stroke="#3dbb88" stroke-width="1.7" fill="none" /><path d="M580.7 305.9 L583 303.6 L585.3 305.9 M580.7 315.7 L583 318 L585.3 315.7 M578.1 308.5 L575.8 310.8 L578.1 313.1 M587.9 308.5 L590.2 310.8 L587.9 313.1" stroke="#08301f" stroke-width="0.9" fill="none" />
<path d="M577.4 358.1 H588.6 M583 360 V371.9 M577.5 365.5 L583 360 L588.5 365.5" stroke="#3dbb88" stroke-width="2.1" fill="none" /><path d="M577.4 358.1 H588.6 M583 360 V371.9 M577.5 365.5 L583 360 L588.5 365.5" stroke="#145a3f" stroke-width="1.25" fill="none" />
<path d="M552.1 383.4 V394.6 M554 389 H565.9 M559.5 383.5 L554 389 L559.5 394.5" stroke="#3dbb88" stroke-width="2.1" fill="none" /><path d="M552.1 383.4 V394.6 M554 389 H565.9 M559.5 383.5 L554 389 L559.5 394.5" stroke="#145a3f" stroke-width="1.25" fill="none" />
<path d="M613.9 383.4 V394.6 M612 389 H600.1 M606.5 383.5 L612 389 L606.5 394.5" stroke="#3dbb88" stroke-width="2.1" fill="none" /><path d="M613.9 383.4 V394.6 M612 389 H600.1 M606.5 383.5 L612 389 L606.5 394.5" stroke="#145a3f" stroke-width="1.25" fill="none" />
<path d="M577.4 419.6 H588.6 M583 417.7 V405.8 M577.5 412.2 L583 417.7 L588.5 412.2" stroke="#3dbb88" stroke-width="2.1" fill="none" /><path d="M577.4 419.6 H588.6 M583 417.7 V405.8 M577.5 412.2 L583 417.7 L588.5 412.2" stroke="#145a3f" stroke-width="1.25" fill="none" />
<rect x="568.7" y="437" width="4.6" height="11.5" rx="0" stroke="#3dbb88" stroke-width="1.9" fill="none"/><rect x="568.7" y="437" width="4.6" height="11.5" rx="0" stroke="#0b3a27" stroke-width="1.05" fill="none"/><path d="M563.5 438 L566.4 442.8 L563.5 447.6 M578.6 438 L575.8 442.8 L578.6 447.6" stroke="#3dbb88" stroke-width="1.9" fill="none" /><path d="M563.5 438 L566.4 442.8 L563.5 447.6 M578.6 438 L575.8 442.8 L578.6 447.6" stroke="#145a3f" stroke-width="1.05" fill="none" />
<rect x="588.8" y="440.5" width="12.5" height="4.8" rx="0" stroke="#3dbb88" stroke-width="1.9" fill="none"/><rect x="588.8" y="440.5" width="12.5" height="4.8" rx="0" stroke="#0b3a27" stroke-width="1.05" fill="none"/><path d="M590 435.7 L595 438 L600 435.7 M590 449.9 L595 447.6 L600 449.9" stroke="#3dbb88" stroke-width="1.9" fill="none" /><path d="M590 435.7 L595 438 L600 435.7 M590 449.9 L595 447.6 L600 449.9" stroke="#145a3f" stroke-width="1.05" fill="none" />
<path d="M571 466.1 V480.3" stroke="#3dbb88" stroke-width="2.3" fill="none" /><path d="M571 466.1 V480.3" stroke="#145a3f" stroke-width="1.45" fill="none" /><path d="M564.1 473.1 L571 465.8 L577.9 473.1" stroke="#3dbb88" stroke-width="1.75" fill="none" /><path d="M564.1 473.1 L571 465.8 L577.9 473.1" stroke="#08301f" stroke-width="0.9" fill="none" />
<path d="M595 479.9 V465.7" stroke="#3dbb88" stroke-width="2.3" fill="none" /><path d="M595 479.9 V465.7" stroke="#145a3f" stroke-width="1.45" fill="none" /><path d="M588.1 472.9 L595 480.2 L601.9 472.9" stroke="#3dbb88" stroke-width="1.75" fill="none" /><path d="M588.1 472.9 L595 480.2 L601.9 472.9" stroke="#08301f" stroke-width="0.9" fill="none" />
<path d="M319.1 466.1 L309.7 466.1 L309.7 469.6 L311.6 471.6 L311.6 479.1 L309.1 482 L309.1 493.6 L321.1 493.6 L321.1 482 L316.6 477.4 L316.6 472.1 L319.1 469.6Z M295.3 466.1 L304.7 466.1 L304.7 469.6 L302.8 471.6 L302.8 479.1 L305.3 482 L305.3 493.6 L293.3 493.6 L293.3 482 L297.8 477.4 L297.8 472.1 L295.3 469.6Z M304 470.9 L310.4 470.9 M305.3 484.5 L309.1 484.5" stroke="#35cf96" stroke-width="2.9" fill="none"/><path d="M319.1 466.1 L309.7 466.1 L309.7 469.6 L311.6 471.6 L311.6 479.1 L309.1 482 L309.1 493.6 L321.1 493.6 L321.1 482 L316.6 477.4 L316.6 472.1 L319.1 469.6Z M295.3 466.1 L304.7 466.1 L304.7 469.6 L302.8 471.6 L302.8 479.1 L305.3 482 L305.3 493.6 L293.3 493.6 L293.3 482 L297.8 477.4 L297.8 472.1 L295.3 469.6Z M304 470.9 L310.4 470.9 M305.3 484.5 L309.1 484.5" stroke="#04130c" stroke-width="1.35" fill="none"/>
<path d="M501.5 476.2 L504.5 473.2 L507.5 476.2 Z" fill="#000" stroke="none"/>
<path d="M501.5 483.2 L504.5 486.2 L507.5 483.2 Z" fill="#000" stroke="none"/>
<rect x="617" y="527" width="2" height="2" fill="#b8b8b8" stroke="none"/>
<rect x="617" y="524" width="2" height="2" fill="#b8b8b8" stroke="none"/>
<rect x="617" y="521" width="2" height="2" fill="#b8b8b8" stroke="none"/>
<rect x="614" y="527" width="2" height="2" fill="#b8b8b8" stroke="none"/>
<rect x="614" y="524" width="2" height="2" fill="#b8b8b8" stroke="none"/>
<rect x="611" y="527" width="2" height="2" fill="#b8b8b8" stroke="none"/>
</svg>
</div></body></html>
